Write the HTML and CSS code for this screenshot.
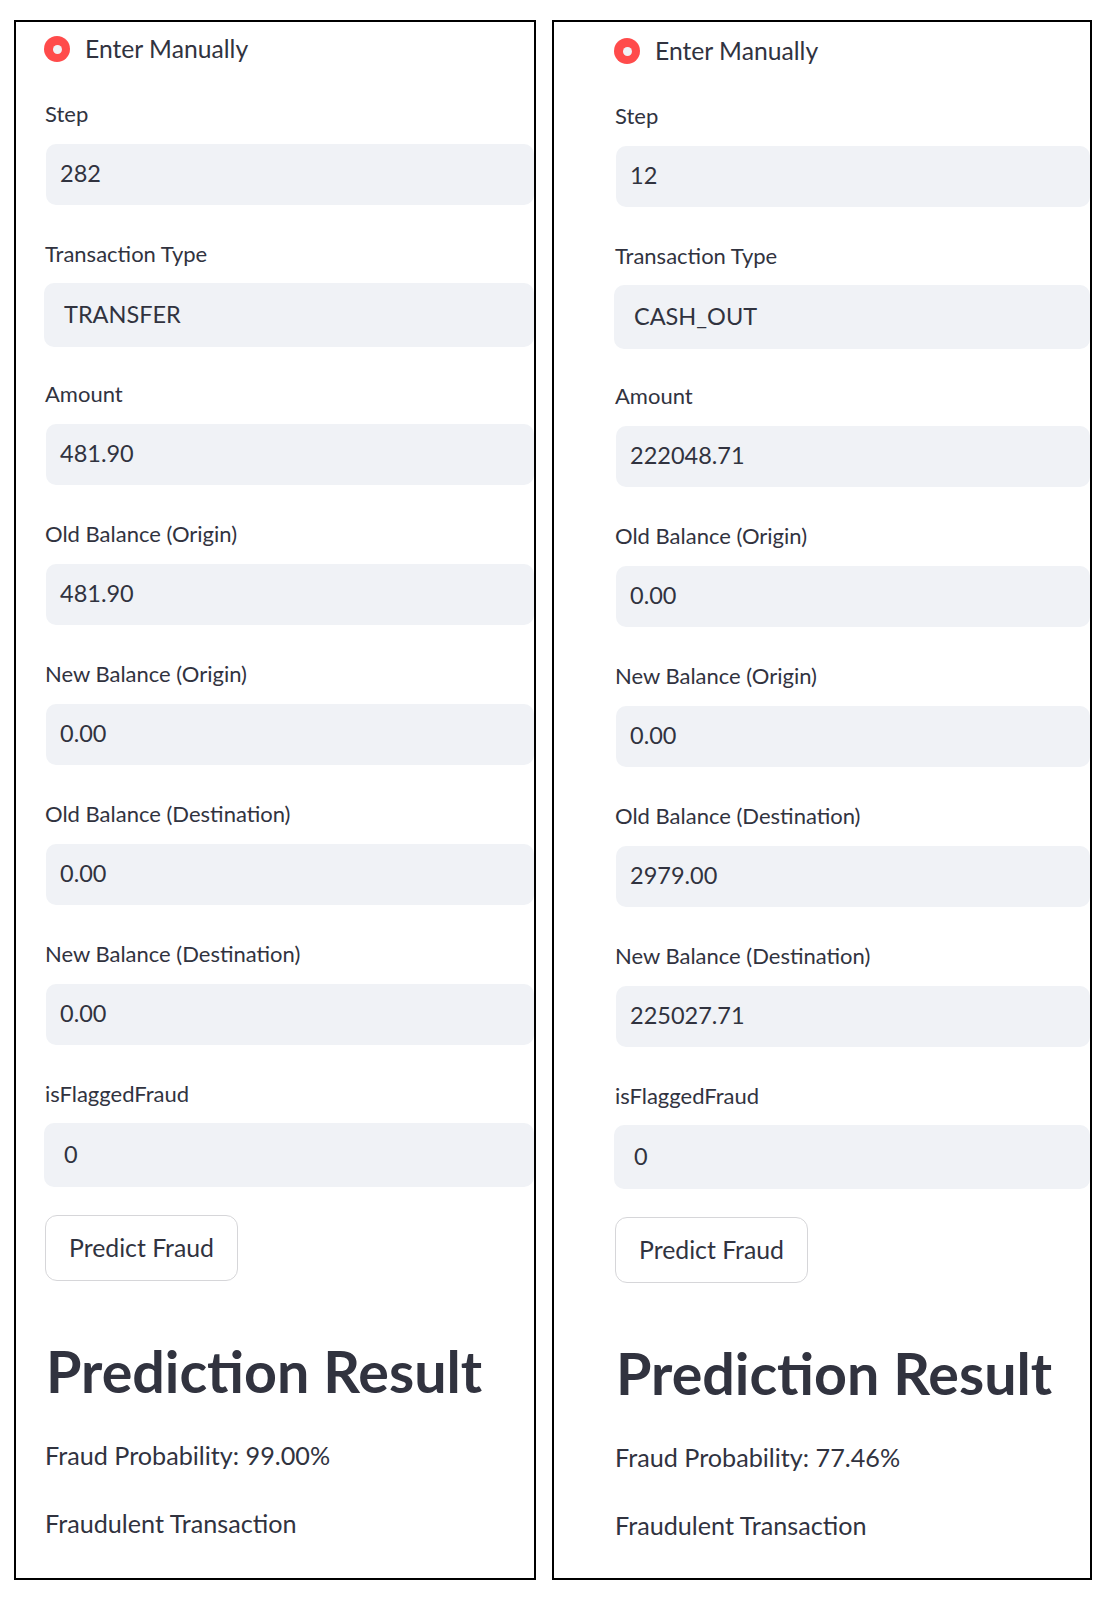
FILE: index.html
```html
<!DOCTYPE html>
<html>
<head>
<meta charset="utf-8">
<link rel="stylesheet" href="styles.css">
</head>
<body>
<div class="page">
  <section class="panel panel-left">
    <div class="radio"><span class="dot"></span><span class="radio-text">Enter Manually</span></div>
    <div class="field"><div class="label">Step</div><div class="input">282</div></div>
    <div class="field sel"><div class="label">Transaction Type</div><div class="select">TRANSFER</div></div>
    <div class="field"><div class="label">Amount</div><div class="input">481.90</div></div>
    <div class="field"><div class="label">Old Balance (Origin)</div><div class="input">481.90</div></div>
    <div class="field"><div class="label">New Balance (Origin)</div><div class="input">0.00</div></div>
    <div class="field"><div class="label">Old Balance (Destination)</div><div class="input">0.00</div></div>
    <div class="field"><div class="label">New Balance (Destination)</div><div class="input">0.00</div></div>
    <div class="field sel last"><div class="label">isFlaggedFraud</div><div class="select">0</div></div>
    <button class="btn">Predict Fraud</button>
    <h1 class="title">Prediction Result</h1>
    <p class="prob">Fraud Probability: 99.00%</p>
    <p class="verdict">Fraudulent Transaction</p>
  </section>
  <section class="panel panel-right">
    <div class="radio"><span class="dot"></span><span class="radio-text">Enter Manually</span></div>
    <div class="field"><div class="label">Step</div><div class="input">12</div></div>
    <div class="field sel"><div class="label">Transaction Type</div><div class="select">CASH_OUT</div></div>
    <div class="field"><div class="label">Amount</div><div class="input">222048.71</div></div>
    <div class="field"><div class="label">Old Balance (Origin)</div><div class="input">0.00</div></div>
    <div class="field"><div class="label">New Balance (Origin)</div><div class="input">0.00</div></div>
    <div class="field"><div class="label">Old Balance (Destination)</div><div class="input">2979.00</div></div>
    <div class="field"><div class="label">New Balance (Destination)</div><div class="input">225027.71</div></div>
    <div class="field sel last"><div class="label">isFlaggedFraud</div><div class="select">0</div></div>
    <button class="btn">Predict Fraud</button>
    <h1 class="title">Prediction Result</h1>
    <p class="prob">Fraud Probability: 77.46%</p>
    <p class="verdict">Fraudulent Transaction</p>
  </section>
</div>
</body>
</html>
```
FILE: styles.css
```css
* { box-sizing: border-box; }
html, body { margin: 0; padding: 0; background: #fff; }
body {
  font-family: "Lato", "Noto Sans", sans-serif;
  color: #31333f;
}
.page {
  display: flex;
  gap: 16px;
  padding: 20px 0 0 14px;
}
.panel {
  border: 2px solid #000;
  height: 1560px;
  overflow: hidden;
  display: flex;
  flex-direction: column;
  align-items: flex-start;
}
.panel-left { width: 522px; padding: 12px 0 0 28px; }
.panel-right { width: 540px; padding: 14px 0 0 60px; }
.radio {
  display: flex;
  align-items: center;
  height: 30px;
  margin-bottom: 35px;
}
.dot {
  width: 26px; height: 26px;
  border-radius: 50%;
  background: #ff4b4b;
  display: flex; align-items: center; justify-content: center;
  margin-right: 15px;
}
.dot::after {
  content: "";
  width: 9px; height: 9px; border-radius: 50%;
  background: #f0f2f6;
}
.radio-text { font-size: 24.7px; line-height: 30px; }
.field { width: 100%; display: flex; flex-direction: column; padding-bottom: 34px; }
.field.sel { padding-bottom: 32px; }
.field.last { padding-bottom: 28px; }
.label { font-size: 22px; line-height: 30px; margin-bottom: 15px; padding-left: 1px; }
.sel .label { margin-bottom: 14px; }
.input {
  height: 61px;
  background: #f0f2f6;
  border-radius: 10px;
  font-size: 23.5px;
  line-height: 59px;
  padding-left: 14px;
  margin-left: 2px;
}
.select {
  height: 64px;
  background: #f0f2f6;
  border-radius: 10px;
  font-size: 23.5px;
  line-height: 63px;
  padding-left: 20px;
}
.btn {
  font-family: inherit;
  color: #31333f;
  font-size: 24.8px;
  background: #fff;
  border: 1.5px solid #d6d6d9;
  border-radius: 12px;
  height: 66px;
  width: 193px;
  margin: 0 0 0 1px;
  padding: 0 0 2px 0;
}
.title {
  font-size: 57.4px;
  font-weight: 700;
  line-height: 80px;
  margin: 50px 0 0 2px;
}
.prob { font-size: 25.2px; line-height: 36px; margin: 26px 0 0 1px; }
.verdict { font-size: 25.2px; line-height: 36px; margin: 32px 0 0 1px; }
```
